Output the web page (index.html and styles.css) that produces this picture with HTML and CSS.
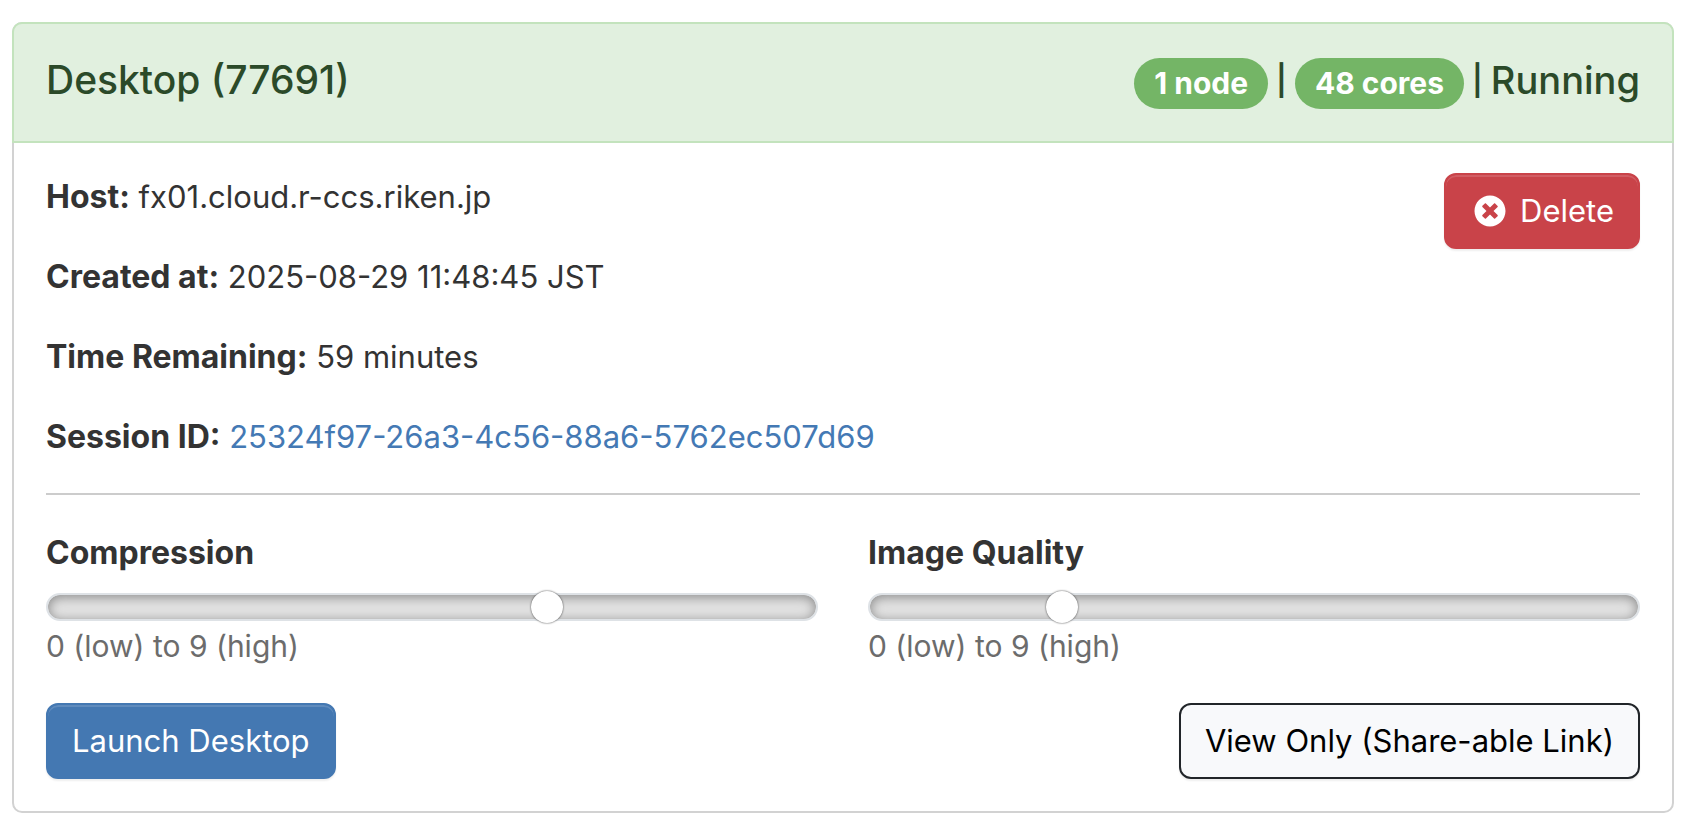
FILE: index.html
```html
<!DOCTYPE html>
<html lang="en">
<head>
<meta charset="utf-8">
<title>Desktop session</title>
<link rel="stylesheet" href="styles.css">
</head>
<body>
<main class="card">
  <header class="card-header">
    <h1 class="title">Desktop (77691)</h1>
    <div class="status"><span class="badge">1 node</span><span class="sep">|</span><span class="badge">48 cores</span><span class="sep">|</span><span>Running</span></div>
  </header>
  <div class="card-body">
    <div class="summary">
      <div class="details">
        <p><strong>Host:</strong> fx01.cloud.r-ccs.riken.jp</p>
        <p><strong>Created at:</strong> 2025-08-29 11:48:45 JST</p>
        <p><strong>Time Remaining:</strong> 59 minutes</p>
        <p><strong>Session ID:</strong> <a href="#session">25324f97-26a3-4c56-88a6-5762ec507d69</a></p>
      </div>
      <button class="btn btn-danger" type="button">
        <svg class="icon" viewBox="0 0 512 512" aria-hidden="true"><path fill="currentColor" d="M256 8C119 8 8 119 8 256s111 248 248 248 248-111 248-248S393 8 256 8zm121.600 313.100c4.700 4.700 4.700 12.300 0 17L338 377.600c-4.700 4.700-12.300 4.700-17 0L256 312l-65.100 65.600c-4.700 4.700-12.300 4.700-17 0L134.400 338c-4.700-4.700-4.700-12.300 0-17l65.600-65-65.600-65.100c-4.700-4.700-4.700-12.300 0-17l39.600-39.600c4.700-4.700 12.300-4.700 17 0l65 65.700 65.100-65.600c4.700-4.700 12.300-4.700 17 0l39.600 39.600c4.700 4.700 4.700 12.300 0 17L312 256l65.600 65.100z"/></svg>
        Delete
      </button>
    </div>
    <hr class="divider">
    <form class="connect">
      <div class="sliders">
        <div class="field">
          <label for="compression">Compression</label>
          <input id="compression" class="range" type="range" min="0" max="9" value="6">
          <small>0 (low) to 9 (high)</small>
        </div>
        <div class="field">
          <label for="quality">Image Quality</label>
          <input id="quality" class="range" type="range" min="0" max="9" value="2">
          <small>0 (low) to 9 (high)</small>
        </div>
      </div>
      <div class="actions">
        <button class="btn btn-primary" type="button">Launch Desktop</button>
        <button class="btn btn-light" type="button">View Only (Share-able Link)</button>
      </div>
    </form>
  </div>
</main>
</body>
</html>
```
FILE: styles.css
```css
* { box-sizing: border-box; }
body {
  margin: 0;
  padding: 22px 18px 14px 12px;
  background: #fff;
  color: #333;
  font: 31px/48px Inter, "Liberation Sans", sans-serif;
}
.card {
  border: 2px solid #d2d2d2;
  border-radius: 10px;
}
.card-header {
  display: flex;
  justify-content: space-between;
  margin: -2px -2px 0;
  padding: 32px;
  border: 2px solid #c3e3bd;
  border-radius: 10px 10px 0 0;
  background: #e1f0df;
  color: #2b4a29;
}
.title, .status { margin: 0; font-size: 39px; line-height: 48px; font-weight: 500; }
.status { display: flex; gap: 8px; font-size: 38px; }
.sep { font-size: 30px; font-weight: 600; }
.badge {
  margin-top: 2px;
  padding: 0 20px;
  border-radius: 26px;
  background: #74b566;
  color: #fff;
  font-size: 30px;
  line-height: 51px;
  font-weight: 700;
}
.card-body { padding: 30px 32px 32px; }
.summary { display: flex; justify-content: space-between; align-items: flex-start; }
.details p { margin: 0 0 32px; }
strong, label { font-size: 32px; font-weight: 700; }
.details a { color: #4479b4; text-decoration: none; }
.btn {
  display: flex;
  align-items: center;
  gap: 14px;
  padding: 12px 24px;
  border: 2px solid;
  border-radius: 12px;
  font: inherit;
}
.btn-danger { border-color: #c94349; background: #c94349; color: #fff; box-shadow: inset 0 2px 0 #d15d63, 0 2px 2px #0001; }
.btn-primary { border-color: #4478b2; background: #4478b2; color: #fff; box-shadow: inset 0 2px 0 #5f8bbd, 0 2px 2px #0001; }
.btn-light { border-color: #212529; background: #f8f9fb; color: #000; box-shadow: 0 2px 2px #0001; }
.icon { width: 32px; height: 32px; margin-left: 4px; }
.divider { margin: 0 0 34px; border: 0; border-top: 2px solid #ccc; }
.sliders { display: grid; grid-template-columns: 1fr 1fr; gap: 50px; }
.field { display: flex; flex-direction: column; }
.field small { color: #6c6c6c; font-size: 30px; line-height: 46px; }
.range {
  appearance: none;
  width: 100%;
  height: 28px;
  margin: 16px 0 2px;
  padding: 0 22px;
  border: 2px solid #dee2e6;
  border-radius: 14px;
  background: #e2e2e2;
  box-shadow: inset 0 2px 12px #888;
}
.range::-webkit-slider-thumb {
  appearance: none;
  width: 32px;
  height: 32px;
  border-radius: 50%;
  background: #fff;
  box-shadow: 0 0 2px #333;
}
.actions { display: flex; justify-content: space-between; margin-top: 34px; }
```
